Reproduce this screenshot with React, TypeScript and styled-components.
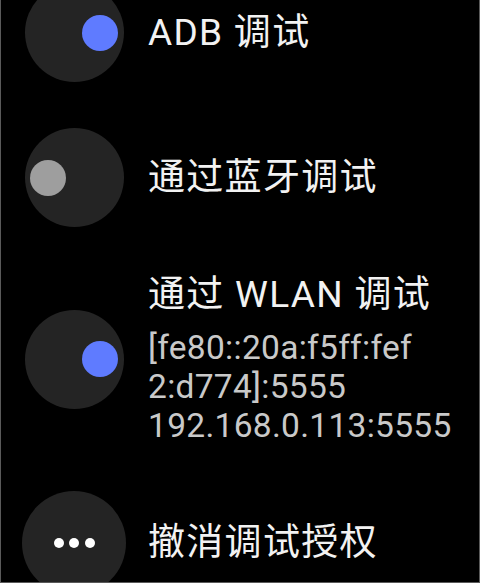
import styled, { createGlobalStyle } from "styled-components";

const GlobalStyle = createGlobalStyle`
  html, body {
    margin: 0;
    padding: 0;
    background: #000;
  }
`;

const Screen = styled.div`
  width: 478px;
  height: 582px;
  overflow: hidden;
  background: #000;
  border: 1px solid #5a5a5a;
  border-top: none;
  font-family: Roboto, "Noto Sans CJK SC", sans-serif;
`;

const List = styled.div`
  display: flex;
  flex-direction: column;
  gap: 46px;
  margin-top: -17px;
`;

const Row = styled.div`
  display: flex;
  align-items: center;
  padding-left: 23px;
`;

const IconSlot = styled.div`
  width: 100px;
  flex-shrink: 0;
  display: flex;
  justify-content: center;
`;

const Chip = styled.div<{ size: number }>`
  width: ${(p) => p.size}px;
  height: ${(p) => p.size}px;
  flex-shrink: 0;
  border-radius: 50%;
  background: #242424;
  display: flex;
  align-items: center;
  justify-content: center;
`;

const Knob = styled.div<{ on: boolean }>`
  width: 36px;
  height: 36px;
  border-radius: 50%;
  background: ${(p) => (p.on ? "#5f7bff" : "#9e9e9e")};
  transform: translateX(${(p) => (p.on ? 26 : -26)}px);
`;

const Dots = styled.div`
  display: flex;
  gap: 5.5px;
`;

const Dot = styled.span`
  width: 10px;
  height: 10px;
  border-radius: 50%;
  background: #fff;
`;

const Texts = styled.div`
  margin-left: 24px;
  display: flex;
  flex-direction: column;
`;

const Title = styled.div`
  color: #f2f2f2;
  font-size: 37px;
  line-height: 44px;
  letter-spacing: 1.3px;
  white-space: nowrap;
`;

const Detail = styled.div`
  margin-top: 11px;
  color: #c9c9c9;
  font-size: 33.5px;
  line-height: 39px;
  letter-spacing: 0.3px;
  white-space: nowrap;
`;

export default function App() {
  return (
    <>
      <GlobalStyle />
      <Screen>
        <List>
          <Row>
            <IconSlot>
              <Chip size={99}>
                <Knob on />
              </Chip>
            </IconSlot>
            <Texts>
              <Title>ADB 调试</Title>
            </Texts>
          </Row>
          <Row>
            <IconSlot>
              <Chip size={99}>
                <Knob on={false} />
              </Chip>
            </IconSlot>
            <Texts>
              <Title>通过蓝牙调试</Title>
            </Texts>
          </Row>
          <Row>
            <IconSlot>
              <Chip size={99}>
                <Knob on />
              </Chip>
            </IconSlot>
            <Texts>
              <Title>通过 WLAN 调试</Title>
              <Detail>
                [fe80::20a:f5ff:fef
                <br />
                2:d774]:5555
                <br />
                192.168.0.113:5555
              </Detail>
            </Texts>
          </Row>
          <Row>
            <IconSlot>
              <Chip size={104}>
                <Dots>
                  <Dot />
                  <Dot />
                  <Dot />
                </Dots>
              </Chip>
            </IconSlot>
            <Texts>
              <Title>撤消调试授权</Title>
            </Texts>
          </Row>
        </List>
      </Screen>
    </>
  );
}
